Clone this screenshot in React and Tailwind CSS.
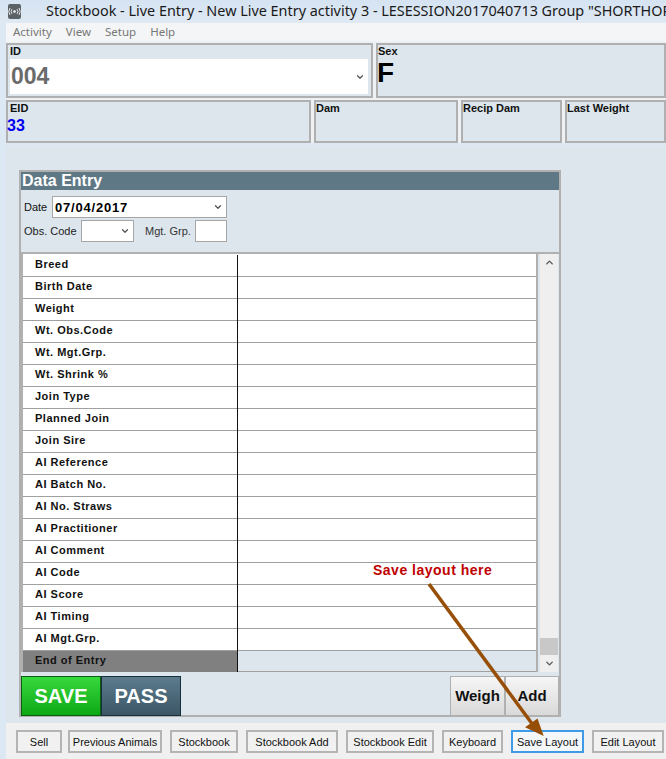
import { ChevronDown, ChevronUp } from 'lucide-react'

const rows = [
  'Breed', 'Birth Date', 'Weight', 'Wt. Obs.Code', 'Wt. Mgt.Grp.', 'Wt. Shrink %',
  'Join Type', 'Planned Join', 'Join Sire', 'AI Reference', 'AI Batch No.', 'AI No. Straws',
  'AI Practitioner', 'AI Comment', 'AI Code', 'AI Score', 'AI Timing', 'AI Mgt.Grp.',
]

const bottomButtons = [
  { label: 'Sell', width: 'w-[46px]', gap: 'ml-0' },
  { label: 'Previous Animals', width: 'w-[94px]', gap: 'ml-[6px]' },
  { label: 'Stockbook', width: 'w-[68px]', gap: 'ml-[8px]' },
  { label: 'Stockbook Add', width: 'w-[92px]', gap: 'ml-[8px]' },
  { label: 'Stockbook Edit', width: 'w-[88px]', gap: 'ml-[8px]' },
  { label: 'Keyboard', width: 'w-[61px]', gap: 'ml-[8px]' },
  { label: 'Save Layout', width: 'w-[73px]', gap: 'ml-[8px]', active: true },
  { label: 'Edit Layout', width: 'w-[72px]', gap: 'ml-[8px]' },
]

function InfoPanel({ label, className, children }) {
  return (
    <div className={`border-2 border-[#b0b0b0] bg-[#dce6ec] ${className}`}>
      <div className="text-[11px] leading-[13px] font-bold text-[#111]">{label}</div>
      {children}
    </div>
  )
}

function EntryRow({ label }) {
  return (
    <div className="flex h-[22px] bg-white">
      <div className="w-[215px] border-r border-[#111]">
        <div className="h-[22px] border-b border-[#a0a0a0] pl-[12px] text-[11px] leading-[19px] font-bold tracking-[0.5px] text-[#111]">
          {label}
        </div>
      </div>
      <div className="flex-1 border-b border-[#a0a0a0]" />
    </div>
  )
}

function BottomButton({ label, width, gap, active }) {
  return (
    <button
      className={`${width} ${gap} h-[23px] border-2 pt-px text-[11px] leading-none text-[#111] ${
        active ? 'border-[#3f9be8] bg-[#f4f8fb]' : 'border-[#b4b4b4] bg-[#f1f1f1]'
      }`}
    >
      {label}
    </button>
  )
}

export default function App() {
  return (
    <div className="relative h-[759px] w-[666px] overflow-hidden bg-[#dce8f3] font-['Liberation_Sans',sans-serif]">
      {/* title bar */}
      <div className="flex h-[23px] items-center bg-gradient-to-b from-[#d5e3f2] to-[#e0e9f3]">
        <div className="ml-[8px] flex h-[15px] w-[15px] items-center justify-center rounded-[2px] bg-[#5a6268]">
          <svg width="13" height="9" viewBox="0 0 13 9" fill="none" stroke="#e8e8e8" strokeWidth="1">
            <circle cx="6.5" cy="4.5" r="1" fill="#e8e8e8" />
            <path d="M4 2.2a3.5 3.5 0 0 0 0 4.6M9 2.2a3.5 3.5 0 0 1 0 4.6M2 1a6 6 0 0 0 0 7M11 1a6 6 0 0 1 0 7" />
          </svg>
        </div>
        <div className="ml-[25px] whitespace-nowrap font-['Noto_Sans',sans-serif] text-[14.4px] leading-none text-[#1a1a1a]">
          Stockbook - Live Entry - New Live Entry activity 3 - LESESSION2017040713 Group "SHORTHOR
        </div>
      </div>

      <div className="ml-[6px]">
        {/* menu */}
        <div className="flex h-[18px] items-center gap-[14px] bg-[#f4f5f6] pl-[7px] font-['Noto_Sans',sans-serif] text-[11.5px] text-[#777]">
          <span>Activity</span>
          <span>View</span>
          <span>Setup</span>
          <span>Help</span>
        </div>

        <div className="bg-[#eef1f3] pt-[2px]">
          {/* id and sex */}
          <div className="flex h-[55px] gap-[3px]">
            <InfoPanel label="ID" className="w-[367px] px-[2px]">
              <div className="mt-[1px] flex h-[35px] w-[358px] items-center justify-between bg-white pl-px pr-[3px]">
                <span className="text-[23px] leading-none font-bold text-[#6b6b6b]">004</span>
                <ChevronDown size={10} strokeWidth={3} className="text-[#555]" />
              </div>
            </InfoPanel>
            <InfoPanel label="Sex" className="flex-1">
              <div className="-ml-px mt-[3px] text-[28px] leading-[24px] font-bold text-black">F</div>
            </InfoPanel>
          </div>

          {/* eid row */}
          <div className="mt-[2px] flex h-[43px] gap-[3px]">
            <InfoPanel label="EID" className="w-[305px] px-[2px]">
              <div className="-ml-[3px] mt-[3px] text-[16px] leading-[15px] font-bold text-[#0000ee]">33</div>
            </InfoPanel>
            <InfoPanel label="Dam" className="w-[144px]" />
            <InfoPanel label="Recip Dam" className="w-[101px]" />
            <InfoPanel label="Last Weight" className="flex-1" />
          </div>
        </div>

        {/* main area */}
        <div className="mt-[2px] h-[578px] bg-[#dce6ec] pl-[13px] pt-[25px]">
          <div className="h-[547px] w-[542px] border-2 border-[#b0b0b0]">
            <div className="h-[18px] bg-[#5f7885] pl-[1px] text-[16px] leading-[18px] font-bold text-white">
              Data Entry
            </div>

            <div className="mt-[6px] flex h-[22px] items-center pl-[3px]">
              <span className="w-[28px] text-[11px] text-[#111]">Date</span>
              <div className="flex h-[22px] w-[175px] items-center justify-between border border-[#a6a6a6] bg-white pl-[2px] pr-[3px]">
                <span className="text-[13px] leading-none font-bold tracking-[0.8px] text-black">07/04/2017</span>
                <ChevronDown size={10} strokeWidth={3} className="text-[#555]" />
              </div>
            </div>

            <div className="mt-[2px] flex h-[22px] items-center pl-[3px]">
              <span className="w-[57px] text-[11px] text-[#222]">Obs. Code</span>
              <div className="flex h-[22px] w-[53px] items-center justify-end border border-[#a6a6a6] bg-white pr-[3px]">
                <ChevronDown size={10} strokeWidth={3} className="text-[#555]" />
              </div>
              <span className="ml-[11px] w-[50px] text-[11px] text-[#333]">Mgt. Grp.</span>
              <div className="h-[22px] w-[32px] border border-[#a6a6a6] bg-white" />
            </div>

            {/* list and scrollbar */}
            <div className="mt-[10px] flex h-[420px] w-[538px] border-t-2 border-[#b0b0b0]">
              <div className="h-[418px] w-[517px] border-x-2 border-[#b0b0b0] bg-white pt-px">
                {rows.map(r => <EntryRow key={r} label={r} />)}
                <div className="flex h-[21px] bg-[#dce6ec]">
                  <div className="w-[215px] border-r border-[#111] bg-[#808080] pl-[12px] text-[11px] leading-[19px] font-bold tracking-[0.5px] text-[#111]">
                    End of Entry
                  </div>
                  <div className="flex-1 border-b border-[#a0a0a0]" />
                </div>
              </div>
              <div className="ml-[2px] flex w-[18px] flex-col items-center bg-[#efefef]">
                <ChevronUp size={11} strokeWidth={3} className="mt-[3px] text-[#555]" />
                <div className="mt-auto h-[17px] w-full bg-[#c8c8c8]" />
                <ChevronDown size={11} strokeWidth={3} className="my-[3px] text-[#555]" />
              </div>
            </div>

            {/* action buttons */}
            <div className="mt-[4px] flex h-[40px] items-stretch justify-between">
              <div className="flex">
                <button className="w-[80px] border border-[#0c5c12] bg-gradient-to-b from-[#36d93c] to-[#0aa814] text-[20px] font-bold text-white">
                  SAVE
                </button>
                <button className="w-[80px] border border-[#16303d] bg-gradient-to-b from-[#5c7c8e] to-[#3c5666] text-[20px] font-bold text-white">
                  PASS
                </button>
              </div>
              <div className="flex">
                <button className="w-[55px] border border-[#b0b0b0] bg-gradient-to-b from-[#f6f6f6] to-[#d9d9d9] text-[15px] font-bold text-[#111]">
                  Weigh
                </button>
                <button className="w-[54px] border border-[#b0b0b0] bg-gradient-to-b from-[#f6f6f6] to-[#d9d9d9] text-[15px] font-bold text-[#111]">
                  Add
                </button>
              </div>
            </div>
          </div>
        </div>

        {/* bottom bar */}
        <div className="flex h-[36px] items-start bg-[#f0f0f0] pl-[10px] pt-[7px]">
          {bottomButtons.map(b => <BottomButton key={b.label} {...b} />)}
        </div>
      </div>

      {/* annotation over the screen */}
      <div className="absolute left-[373px] top-[563px] text-[14px] leading-[15px] font-bold tracking-[0.5px] text-[#c00000]">
        Save layout here
      </div>
      <svg className="absolute left-0 top-0" width="666" height="759" viewBox="0 0 666 759" fill="none">
        <path d="M429 584L533 725" stroke="#974f07" strokeWidth="3.5" />
        <path d="M542 734L527 727L537 720Z" fill="#974f07" stroke="#974f07" strokeWidth="2" />
      </svg>
    </div>
  )
}
